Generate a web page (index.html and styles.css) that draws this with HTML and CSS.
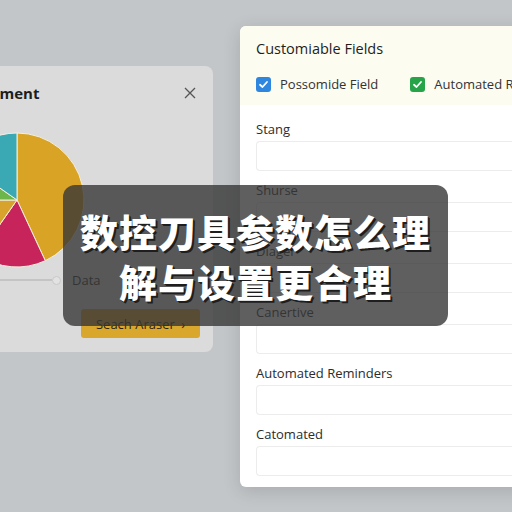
FILE: index.html
```html
<!DOCTYPE html>
<html>
<head>
    <meta charset="utf-8">
    <link rel="stylesheet" href="styles.css">
</head>
<body>
    <div class="stage">
        <!-- Chart card, cut off at the left edge -->
        <div class="chart-card">
            <div class="card-header">
                <span class="card-title">Management</span>
                <span class="close-btn">
                    <svg width="12" height="12" viewBox="0 0 12 12"><path d="M1 1 L11 11 M11 1 L1 11" stroke="#555" stroke-width="1.3" fill="none"/></svg>
                </span>
            </div>
            <div class="chart">
                <svg width="220" height="140" viewBox="0 0 220 140">
                    <g transform="translate(81 67)" stroke="#f4efe0" stroke-width="1">
                        <path d="M0 0 L0 -67 A67 67 0 0 1 28.3 60.7 Z" fill="#d9a426"/>
                        <path d="M0 0 L28.3 60.7 A67 67 0 0 1 -38.4 54.9 Z" fill="#c7245c"/>
                        <path d="M0 0 L-38.4 54.9 A67 67 0 0 1 -67 0 Z" fill="#d8a32c"/>
                        <path d="M0 0 L-67 0 A67 67 0 0 1 -54.9 -38.4 Z" fill="#6db64b"/>
                        <path d="M0 0 L-54.9 -38.4 A67 67 0 0 1 0 -67 Z" fill="#3ba9b4"/>
                    </g>
                </svg>
            </div>
            <div class="slider-row">
                <span class="track"></span>
                <span class="knob"></span>
                <span class="slider-label">Data</span>
            </div>
            <div class="card-footer">
                <button class="search-btn">Seach Araser <span class="chev">&rsaquo;</span></button>
            </div>
        </div>

        <!-- Field settings panel -->
        <div class="fields-panel">
            <div class="panel-top">
                <div class="panel-title">Customiable Fields</div>
                <div class="check-row">
                    <label class="check-item">
                        <span class="checkbox blue">
                            <svg width="11" height="11" viewBox="0 0 11 11"><path d="M2 5.8 L4.5 8 L9 3" stroke="#fff" stroke-width="1.8" fill="none" stroke-linecap="round" stroke-linejoin="round"/></svg>
                        </span>
                        Possomide Field
                    </label>
                    <label class="check-item">
                        <span class="checkbox green">
                            <svg width="11" height="11" viewBox="0 0 11 11"><path d="M2 5.8 L4.5 8 L9 3" stroke="#fff" stroke-width="1.8" fill="none" stroke-linecap="round" stroke-linejoin="round"/></svg>
                        </span>
                        Automated Reminders
                    </label>
                </div>
            </div>
            <div class="panel-body">
                <div class="field"><div class="field-label">Stang</div><div class="field-input"></div></div>
                <div class="field"><div class="field-label">Shurse</div><div class="field-input"></div></div>
                <div class="field"><div class="field-label">Diager</div><div class="field-input"></div></div>
                <div class="field"><div class="field-label">Canertive</div><div class="field-input"></div></div>
                <div class="field"><div class="field-label">Automated Reminders</div><div class="field-input"></div></div>
                <div class="field"><div class="field-label">Catomated</div><div class="field-input"></div></div>
            </div>
        </div>

        <!-- Title banner over the page -->
        <div class="banner">
            <div class="banner-line">数控刀具参数怎么理</div>
            <div class="banner-line">解与设置更合理</div>
        </div>
    </div>
</body>
</html>
```

FILE: styles.css
```css
html, body {
    margin: 0;
    padding: 0;
}
body {
    width: 512px;
    height: 512px;
    overflow: hidden;
    background-color: #c3c6c9;
    font-family: "Open Sans", "Liberation Sans", sans-serif;
    color: #222;
}
.stage {
    position: relative;
    display: flex;
    align-items: flex-start;
    width: 512px;
    height: 512px;
}
.chart-card {
    flex-shrink: 0;
    width: 293px;
    height: 286px;
    margin-top: 66px;
    margin-left: -80px;
    background-color: #dbdbdb;
    border-radius: 8px;
    box-sizing: border-box;
    padding: 0 13px 0 16px;
    display: flex;
    flex-direction: column;
}
.card-header {
    display: flex;
    align-items: center;
    justify-content: space-between;
    height: 20px;
    margin-top: 17px;
}
.card-title {
    margin-left: 4px;
    font-size: 15px;
    font-weight: 700;
    color: #1d1d1d;
}
.close-btn {
    display: flex;
    margin-right: 4px;
}
.chart {
    margin-top: 30px;
    height: 134px;
}
.chart svg {
    display: block;
    overflow: visible;
}
.slider-row {
    display: flex;
    align-items: center;
    margin-top: 5px;
    height: 16px;
}
.track {
    width: 116px;
    height: 2px;
    background-color: #c4c4c4;
}
.knob {
    width: 7px;
    height: 7px;
    border: 1px solid #c9c9c9;
    border-radius: 50%;
    background-color: #e2e2e2;
}
.slider-label {
    margin-left: 11px;
    font-size: 13px;
    color: #2a2a2a;
}
.card-footer {
    display: flex;
    justify-content: flex-end;
    margin-top: 21px;
}
.search-btn {
    width: 119px;
    height: 29px;
    border: none;
    border-radius: 3px;
    background-color: #d9a72b;
    font-family: "Open Sans", "Liberation Sans", sans-serif;
    font-size: 13px;
    color: #2b2410;
    padding: 0;
}
.chev {
    margin-left: 3px;
}
.fields-panel {
    flex-shrink: 0;
    width: 300px;
    margin-top: 26px;
    margin-left: 27px;
    background-color: #ffffff;
    border-radius: 6px;
    box-shadow: 0 4px 18px rgba(0, 0, 0, 0.14);
    overflow: hidden;
}
.panel-top {
    background-color: #fcfcf1;
    padding: 13px 16px 13px 16px;
}
.panel-title {
    font-size: 14.5px;
    font-weight: 500;
    line-height: 20px;
    color: #1e1e1e;
}
.check-row {
    display: flex;
    gap: 32px;
    margin-top: 17px;
    height: 16px;
    white-space: nowrap;
}
.check-item {
    display: flex;
    align-items: center;
    gap: 9px;
    font-size: 13px;
    color: #333;
}
.checkbox {
    width: 15px;
    height: 15px;
    border-radius: 3px;
    display: flex;
    align-items: center;
    justify-content: center;
}
.checkbox.blue { background-color: #2f86de; }
.checkbox.green { background-color: #27a349; }
.panel-body {
    padding: 15px 0 11px 16px;
    display: flex;
    flex-direction: column;
    gap: 10px;
}
.field-label {
    font-size: 13px;
    line-height: 18px;
    color: #2c2c2c;
    margin-bottom: 3px;
}
.field-input {
    height: 28px;
    border: 1px solid #ececec;
    border-right: none;
    border-radius: 4px 0 0 4px;
    background-color: #fff;
}
.banner {
    position: absolute;
    left: 63px;
    top: 185px;
    width: 385px;
    height: 141px;
    border-radius: 12px;
    background-color: rgba(55, 55, 55, 0.8);
    display: flex;
    flex-direction: column;
    align-items: center;
    justify-content: center;
}
.banner-line {
    font-family: "Noto Sans CJK SC", sans-serif;
    font-size: 38px;
    font-weight: 900;
    letter-spacing: 1px;
    line-height: 50px;
    color: #ffffff;
    text-shadow: 2px 2px 0 #1e1e1e, 1px 1px 0 #1e1e1e;
}
```
